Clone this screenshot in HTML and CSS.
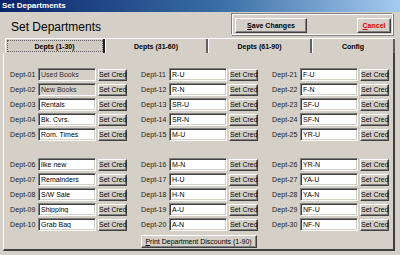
FILE: index.html
```html
<!DOCTYPE html>
<html lang="en">

<head>
  <meta charset="UTF-8">
  <meta name="viewport" content="width=device-width, initial-scale=1.0">
  <link rel="stylesheet" href="styles.css">
  <title>Set Departments</title>
</head>

<body>
  <div class="window">
    <div class="titlebar">Set Departments</div>

    <header class="header">
      <h1>Set Departments</h1>
      <div class="actions">
        <button class="btn btn-save"><u>S</u>ave Changes</button>
        <button class="btn btn-cancel"><u>C</u>ancel</button>
      </div>
    </header>

    <nav class="tabs">
      <div class="tab tab-active"><span>Depts (1-30)</span></div>
      <div class="tab tab-2"><span>Depts (31-60)</span></div>
      <div class="tab tab-3"><span>Depts (61-90)</span></div>
      <div class="tab tab-4"><span>Config</span></div>
    </nav>

    <main class="panel">
      <div class="columns">
        <div class="col">
          <div class="group">
            <div class="row"><label>Dept-01</label><input class="field locked" value="Used Books" readonly><button class="btn">Set Cred</button></div>
            <div class="row"><label>Dept-02</label><input class="field locked" value="New Books" readonly><button class="btn">Set Cred</button></div>
            <div class="row"><label>Dept-03</label><input class="field" value="Rentals"><button class="btn">Set Cred</button></div>
            <div class="row"><label>Dept-04</label><input class="field" value="Bk. Cvrs."><button class="btn">Set Cred</button></div>
            <div class="row"><label>Dept-05</label><input class="field" value="Rom. Times"><button class="btn">Set Cred</button></div>
          </div>
          <div class="group">
            <div class="row"><label>Dept-06</label><input class="field" value="like new"><button class="btn">Set Cred</button></div>
            <div class="row"><label>Dept-07</label><input class="field" value="Remainders"><button class="btn">Set Cred</button></div>
            <div class="row"><label>Dept-08</label><input class="field" value="S/W Sale"><button class="btn">Set Cred</button></div>
            <div class="row"><label>Dept-09</label><input class="field" value="Shipping"><button class="btn">Set Cred</button></div>
            <div class="row"><label>Dept-10</label><input class="field" value="Grab Bag"><button class="btn">Set Cred</button></div>
          </div>
        </div>

        <div class="col">
          <div class="group">
            <div class="row"><label>Dept-11</label><input class="field" value="R-U"><button class="btn">Set Cred</button></div>
            <div class="row"><label>Dept-12</label><input class="field" value="R-N"><button class="btn">Set Cred</button></div>
            <div class="row"><label>Dept-13</label><input class="field" value="SR-U"><button class="btn">Set Cred</button></div>
            <div class="row"><label>Dept-14</label><input class="field" value="SR-N"><button class="btn">Set Cred</button></div>
            <div class="row"><label>Dept-15</label><input class="field" value="M-U"><button class="btn">Set Cred</button></div>
          </div>
          <div class="group">
            <div class="row"><label>Dept-16</label><input class="field" value="M-N"><button class="btn">Set Cred</button></div>
            <div class="row"><label>Dept-17</label><input class="field" value="H-U"><button class="btn">Set Cred</button></div>
            <div class="row"><label>Dept-18</label><input class="field" value="H-N"><button class="btn">Set Cred</button></div>
            <div class="row"><label>Dept-19</label><input class="field" value="A-U"><button class="btn">Set Cred</button></div>
            <div class="row"><label>Dept-20</label><input class="field" value="A-N"><button class="btn">Set Cred</button></div>
          </div>
        </div>

        <div class="col">
          <div class="group">
            <div class="row"><label>Dept-21</label><input class="field" value="F-U"><button class="btn">Set Cred</button></div>
            <div class="row"><label>Dept-22</label><input class="field" value="F-N"><button class="btn">Set Cred</button></div>
            <div class="row"><label>Dept-23</label><input class="field" value="SF-U"><button class="btn">Set Cred</button></div>
            <div class="row"><label>Dept-24</label><input class="field" value="SF-N"><button class="btn">Set Cred</button></div>
            <div class="row"><label>Dept-25</label><input class="field" value="YR-U"><button class="btn">Set Cred</button></div>
          </div>
          <div class="group">
            <div class="row"><label>Dept-26</label><input class="field" value="YR-N"><button class="btn">Set Cred</button></div>
            <div class="row"><label>Dept-27</label><input class="field" value="YA-U"><button class="btn">Set Cred</button></div>
            <div class="row"><label>Dept-28</label><input class="field" value="YA-N"><button class="btn">Set Cred</button></div>
            <div class="row"><label>Dept-29</label><input class="field" value="NF-U"><button class="btn">Set Cred</button></div>
            <div class="row"><label>Dept-30</label><input class="field" value="NF-N"><button class="btn">Set Cred</button></div>
          </div>
        </div>
      </div>

      <div class="footer">
        <button class="btn btn-print"><u>P</u>rint Department Discounts (1-90)</button>
      </div>
    </main>
  </div>
</body>

</html>
```

FILE: styles.css
```css
* {
  box-sizing: border-box;
}

body {
  margin: 0;
  font-family: "Liberation Sans", Arial, sans-serif;
  color: #000;
  background: #d4d0c8;
}

.window {
  width: 400px;
  height: 255px;
  background: #d4d0c8;
  overflow: hidden;
}

.titlebar {
  height: 12px;
  padding-left: 2px;
  font-size: 8px;
  font-weight: bold;
  line-height: 12px;
  color: #fff;
  background: linear-gradient(to right, #0a246a, #3a6ea5 55%, #a6caf0);
}

/* header with title and save / cancel */
.header {
  display: flex;
  justify-content: space-between;
  align-items: flex-start;
  height: 26px;
  padding: 1px 7px 0 11px;
}

.header h1 {
  margin: 7px 0 0;
  font-size: 12px;
  font-weight: normal;
  line-height: 14px;
}

.actions {
  display: flex;
  justify-content: space-between;
  width: 162px;
  height: 22px;
  padding: 4px 1px 2px 3px;
  border: 1px solid #808080;
  border-right-color: #fff;
  border-bottom-color: #fff;
  box-shadow: inset 1px 1px #fff, 1px 1px #808080;
}

.btn {
  padding: 0;
  font-family: inherit;
  font-size: 7px;
  line-height: 1;
  white-space: nowrap;
  color: #000;
  background: #d4d0c8;
  border: 1px solid;
  border-color: #fff #404040 #404040 #fff;
  box-shadow: inset -1px -1px #808080;
  border-radius: 0;
}

.btn-save,
.btn-cancel {
  height: 15px;
  font-weight: bold;
}

.btn-save {
  width: 72px;
}

.btn-cancel {
  width: 34px;
  color: #e00000;
}

/* tab strip */
.tabs {
  display: flex;
  height: 15px;
  margin: 0 5px 0 5px;
  border-top: 1px solid #fff;
}

.tab {
  display: flex;
  justify-content: center;
  align-items: center;
  font-size: 7px;
  font-weight: bold;
  border-left: 1px solid #fff;
  border-right: 2px solid #606060;
}

.tab-active {
  width: 100px;
  border-right-color: #202020;
}

.tab-active span {
  display: flex;
  justify-content: center;
  align-items: center;
  width: 96px;
  height: 12px;
  border: 1px dotted #606060;
  background: #d0ccc4;
}

.tab-2 {
  width: 103px;
}

.tab-3 {
  width: 104px;
}

.tab-4 {
  width: 83px;
}

/* department panel */
.panel {
  height: 198px;
  margin: 0 5px 0 3px;
  padding: 15px 0 0 6px;
  border-left: 1px solid #fff;
  border-right: 2px solid #404040;
  border-bottom: 2px solid #404040;
}

.columns {
  display: flex;
  gap: 14px;
}

.col {
  display: flex;
  flex-direction: column;
  gap: 17px;
}

.group {
  display: flex;
  flex-direction: column;
  gap: 2px;
}

.row {
  display: grid;
  grid-template-columns: 26px 58px 29px;
  column-gap: 2px;
  align-items: center;
  height: 13px;
}

.row label {
  font-size: 7px;
  letter-spacing: 0.1px;
  white-space: nowrap;
  color: #202020;
}

.field {
  width: 58px;
  height: 13px;
  padding: 0 2px;
  font-family: inherit;
  font-size: 7px;
  color: #000;
  background: #fff;
  border: 1px solid;
  border-color: #808080 #fff #fff #808080;
  box-shadow: inset 1px 1px #404040, inset -1px -1px #d4d0c8;
  outline: none;
}

.field.locked {
  background: #d4d0c8;
  color: #303030;
}

.row .btn {
  width: 29px;
  height: 12px;
}

.footer {
  display: flex;
  justify-content: center;
  margin-top: 4px;
  padding-right: 6px;
}

.btn-print {
  width: 116px;
  height: 13px;
}
```
